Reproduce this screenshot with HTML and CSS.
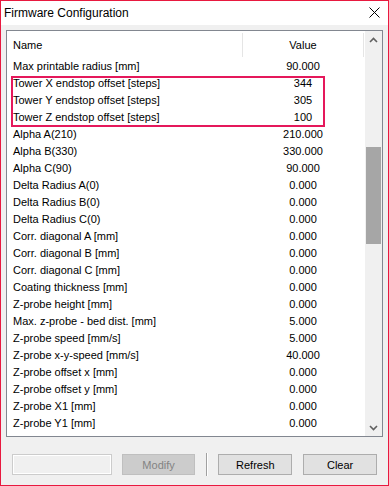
FILE: index.html
```html
<!DOCTYPE html>
<html lang="en">
<head>
  <meta charset="UTF-8">
  <title>Firmware Configuration</title>
  <link rel="stylesheet" href="styles.css">
</head>
<body>
  <div class="window">
    <div class="titlebar">
      <span class="title">Firmware Configuration</span>
      <svg class="close" width="11" height="11" viewBox="0 0 11 11">
        <path d="M0.5 0.5 L10.5 10.5 M10.5 0.5 L0.5 10.5" stroke="#000" stroke-width="1" fill="none"/>
      </svg>
    </div>

    <div class="content">
      <div class="listbox">
        <div class="table">
          <div class="row header">
            <div class="col-name">Name</div>
            <div class="col-value">Value</div>
          </div>
          <div class="row"><div class="col-name">Max printable radius [mm]</div><div class="col-value">90.000</div></div>
          <div class="row"><div class="col-name">Tower X endstop offset [steps]</div><div class="col-value">344</div></div>
          <div class="row"><div class="col-name">Tower Y endstop offset [steps]</div><div class="col-value">305</div></div>
          <div class="row"><div class="col-name">Tower Z endstop offset [steps]</div><div class="col-value">100</div></div>
          <div class="row"><div class="col-name">Alpha A(210)</div><div class="col-value">210.000</div></div>
          <div class="row"><div class="col-name">Alpha B(330)</div><div class="col-value">330.000</div></div>
          <div class="row"><div class="col-name">Alpha C(90)</div><div class="col-value">90.000</div></div>
          <div class="row"><div class="col-name">Delta Radius A(0)</div><div class="col-value">0.000</div></div>
          <div class="row"><div class="col-name">Delta Radius B(0)</div><div class="col-value">0.000</div></div>
          <div class="row"><div class="col-name">Delta Radius C(0)</div><div class="col-value">0.000</div></div>
          <div class="row"><div class="col-name">Corr. diagonal A [mm]</div><div class="col-value">0.000</div></div>
          <div class="row"><div class="col-name">Corr. diagonal B [mm]</div><div class="col-value">0.000</div></div>
          <div class="row"><div class="col-name">Corr. diagonal C [mm]</div><div class="col-value">0.000</div></div>
          <div class="row"><div class="col-name">Coating thickness [mm]</div><div class="col-value">0.000</div></div>
          <div class="row"><div class="col-name">Z-probe height [mm]</div><div class="col-value">0.000</div></div>
          <div class="row"><div class="col-name">Max. z-probe - bed dist. [mm]</div><div class="col-value">5.000</div></div>
          <div class="row"><div class="col-name">Z-probe speed [mm/s]</div><div class="col-value">5.000</div></div>
          <div class="row"><div class="col-name">Z-probe x-y-speed [mm/s]</div><div class="col-value">40.000</div></div>
          <div class="row"><div class="col-name">Z-probe offset x [mm]</div><div class="col-value">0.000</div></div>
          <div class="row"><div class="col-name">Z-probe offset y [mm]</div><div class="col-value">0.000</div></div>
          <div class="row"><div class="col-name">Z-probe X1 [mm]</div><div class="col-value">0.000</div></div>
          <div class="row"><div class="col-name">Z-probe Y1 [mm]</div><div class="col-value">0.000</div></div>
        </div>

        <div class="scrollbar">
          <div class="arrow">
            <svg width="9" height="6" viewBox="0 0 9 6"><path d="M1 5 L4.5 1.5 L8 5" stroke="#606060" stroke-width="1.6" fill="none"/></svg>
          </div>
          <div class="track"><div class="thumb"></div></div>
          <div class="arrow">
            <svg width="9" height="6" viewBox="0 0 9 6"><path d="M1 1 L4.5 4.5 L8 1" stroke="#606060" stroke-width="1.6" fill="none"/></svg>
          </div>
        </div>
      </div>

      <div class="actions">
        <div class="textbox"></div>
        <button class="btn disabled">Modify</button>
        <div class="separator"></div>
        <button class="btn">Refresh</button>
        <button class="btn">Clear</button>
      </div>
    </div>

    <!-- annotation around the endstop rows -->
    <div class="highlight"></div>
  </div>
</body>
</html>
```

FILE: styles.css
```css
body {
  margin: 0;
  font-family: "Liberation Sans", Arial, sans-serif;
  font-size: 11px;
  color: #000;
}

.window {
  position: relative;
  width: 389px;
  height: 486px;
  box-sizing: border-box;
  border: 1px solid #e8193f;
  display: flex;
  flex-direction: column;
  background-color: #f0f0f0;
}

.titlebar {
  height: 24px;
  background-color: #fff;
  display: flex;
  align-items: center;
  justify-content: space-between;
  padding: 0 8px 0 3px;
}

.title {
  font-size: 12px;
  margin-top: -1px;
}

.close {
  margin-top: -2px;
}

.content {
  flex: 1;
  padding: 5px 0 0 5px;
}

.listbox {
  width: 377px;
  height: 407px;
  box-sizing: border-box;
  border: 1px solid #828790;
  background-color: #fff;
  display: flex;
  overflow: hidden;
}

.table {
  width: 358px;
}

.row {
  display: flex;
  height: 17px;
  line-height: 17px;
  white-space: nowrap;
}

.row.header {
  height: 27px;
}

.col-name {
  width: 236px;
  padding-left: 6px;
  box-sizing: border-box;
}

.col-value {
  width: 120px;
  text-align: center;
}

.header .col-name,
.header .col-value {
  border-right: 1px solid #e5e5e5;
  margin-top: 2px;
  height: 24px;
  line-height: 24px;
}

.scrollbar {
  width: 17px;
  background-color: #f0f0f0;
  display: flex;
  flex-direction: column;
}

.arrow {
  height: 17px;
  display: flex;
  align-items: center;
  justify-content: center;
}

.track {
  flex: 1;
}

.thumb {
  margin: 99px 1px 0;
  height: 97px;
  background-color: #a6a6a6;
}

.actions {
  display: flex;
  align-items: center;
  margin-top: 16px;
  padding-left: 6px;
}

.textbox {
  width: 98px;
  height: 19px;
  border: 1px solid #cccccc;
  box-shadow: inset 0 0 0 1px #fff;
  background-color: #f0f0f0;
  margin-right: 10px;
}

.btn {
  width: 74px;
  height: 21px;
  padding: 0;
  border: 1px solid #adadad;
  background-color: #e1e1e1;
  font-family: "Liberation Sans", Arial, sans-serif;
  font-size: 11px;
  color: #000;
  margin-right: 11px;
}

.btn.disabled {
  background-color: #cccccc;
  border-color: #bfbfbf;
  color: #838383;
}

.separator {
  width: 1px;
  height: 23px;
  background-color: #a0a0a0;
  box-shadow: 1px 0 0 #fff;
  margin-right: 11px;
}

.highlight {
  position: absolute;
  left: 10px;
  top: 75px;
  width: 314px;
  height: 51px;
  box-sizing: border-box;
  border: 2px solid #e5185b;
}
```
